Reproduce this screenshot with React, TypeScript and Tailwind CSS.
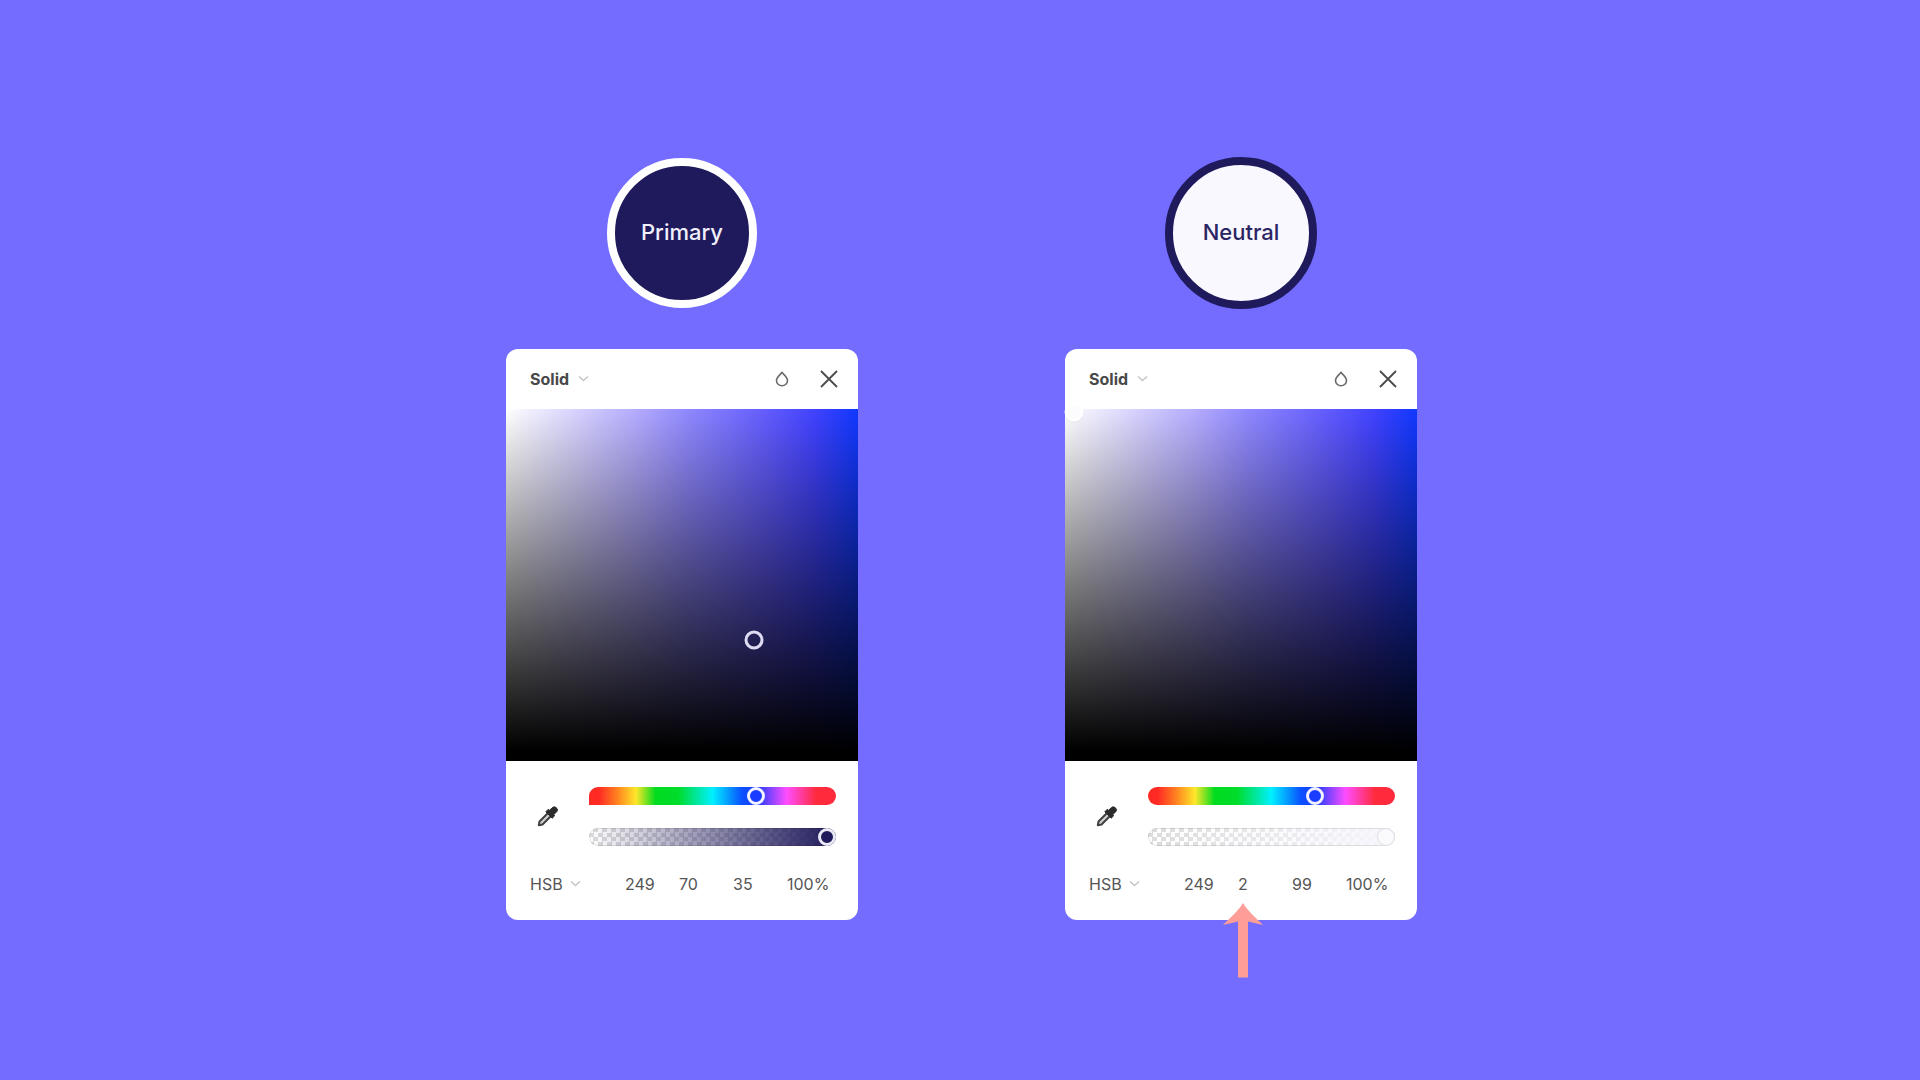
import React from 'react';
import clsx from 'clsx';

type Picker = {
  name: string;
  swatch: string;
  // handle position inside the saturation area
  x: number;
  y: number;
  handle: string;
  hueTrack: string;
  alphaTrack: string;
  alphaThumb: string;
  values: { label: string; value: string }[];
  pointer?: boolean;
};

const pickers: Picker[] = [
  {
    name: 'Primary',
    swatch: 'size-[150px] border-white bg-[#1f1a5b] text-[#f0effb]',
    x: 248,
    y: 231,
    handle: 'border-[#dddcf2]',
    hueTrack: 'rounded-full rounded-bl-none',
    alphaTrack: 'bg-linear-to-r from-[#1f1a5b]/0 to-[#1f1a5b]',
    alphaThumb:
      '[&::-webkit-slider-thumb]:border-3 [&::-webkit-slider-thumb]:border-[#e9e8f5] [&::-webkit-slider-thumb]:bg-[#1f1a5b]',
    values: [
      { label: 'Hue', value: '249' },
      { label: 'Saturation', value: '70' },
      { label: 'Brightness', value: '35' },
      { label: 'Opacity', value: '100%' },
    ],
  },
  {
    name: 'Neutral',
    swatch: 'size-[152px] border-[#1f1a5b] bg-[#f9f8fe] text-[#2b2563]',
    x: 9,
    y: 3,
    handle: 'border-white bg-[#fcfcfe] shadow-xs',
    hueTrack: 'rounded-full',
    alphaTrack: 'bg-linear-to-r from-[#f7f6fc]/0 to-[#f7f6fc]',
    alphaThumb:
      '[&::-webkit-slider-thumb]:border [&::-webkit-slider-thumb]:border-[#dedee4] [&::-webkit-slider-thumb]:bg-[#fbfbfd]',
    values: [
      { label: 'Hue', value: '249' },
      { label: 'Saturation', value: '2' },
      { label: 'Brightness', value: '99' },
      { label: 'Opacity', value: '100%' },
    ],
    pointer: true,
  },
];

function Chevron() {
  return (
    <svg className="pointer-events-none h-2 w-3" viewBox="0 0 12 8" fill="none" stroke="#c4c4c4" strokeWidth="1.4">
      <path d="M1 1.500 5.500 5.500 10 1.500" />
    </svg>
  );
}

function Eyedropper() {
  return (
    <svg className="size-[22px]" viewBox="0 0 22 22" fill="none">
      <path d="M11.500 7.500 2.500 16.500 1.800 20.200 5.500 19.500 14.500 10.500" fill="#cfcfcf" stroke="#3f3f3f" strokeWidth="2" strokeLinejoin="round" />
      <path
        d="M15 3a3 3 0 0 1 4.600 4l-2.900 2.500 1.100 1.100-2.600 2.600-6.400-6.400 2.600-2.600 1.100 1.100z"
        fill="#2b2b2b"
        stroke="#2b2b2b"
        strokeLinejoin="round"
      />
    </svg>
  );
}

function ColorPanel({ picker }: { picker: Picker }) {
  return (
    <div className="relative mt-10 w-[352px] rounded-xl bg-white text-[#555555]">
      {/* Header */}
      <div className="flex h-[60px] items-center pr-5 pl-6">
        <select
          aria-label={`${picker.name} fill type`}
          className="w-12 appearance-none bg-transparent text-base font-bold text-[#484848] outline-none"
        >
          <option>Solid</option>
        </select>
        <Chevron />
        <div className="ml-auto flex items-center gap-[26px]">
          <button aria-label="Blend mode" className="flex size-6 items-center justify-center">
            <svg className="size-4" viewBox="0 0 16 16" fill="none" stroke="#6b6b6b" strokeWidth="1.6">
              <path d="M8 1.3C6.500 3.600 2.500 6.200 2.500 9.500a5.500 5.300 0 0 0 11 0C13.500 6.200 9.500 3.600 8 1.300z" strokeLinejoin="round" />
            </svg>
          </button>
          <button aria-label="Close" className="flex size-[18px] items-center justify-center">
            <svg className="size-[18px]" viewBox="0 0 18 18" stroke="#4a4a4a" strokeWidth="1.8">
              <path d="M1 1 17 17M17 1 1 17" />
            </svg>
          </button>
        </div>
      </div>

      {/* Saturation / brightness */}
      <div className="relative h-[352px] bg-[linear-gradient(to_top,#000_3%,transparent),linear-gradient(to_right,#fff,#b6aeff_36%,#8f88ff_52%,#615aff_75%,#4042ff_88%,#1038ff)]">
        <div
          className={clsx('absolute size-[19px] -translate-1/2 rounded-full border-3', picker.handle)}
          style={{ left: picker.x, top: picker.y }}
        />
      </div>

      {/* Sliders */}
      <div className="flex items-center pt-[26px] pr-[22px] pl-[31px]">
        <button aria-label="Pick color" className="flex size-[22px]">
          <Eyedropper />
        </button>
        <div className="ml-auto flex w-[247px] flex-col gap-[23px]">
          <input
            type="range"
            aria-label={`${picker.name} hue`}
            min={0}
            max={360}
            defaultValue={249}
            className={clsx(
              'block h-[18px] w-full appearance-none bg-[linear-gradient(to_right,#ff2a24_4%,#ff8a20_12%,#ffe72a_19%,#00dc1e_27%,#00dc2a_36%,#00f0ff_50%,#0a50ff_62%,#1a3cff_68%,#ff4dff_80%,#ff2a3c_92%)] [&::-webkit-slider-thumb]:size-[18px] [&::-webkit-slider-thumb]:appearance-none [&::-webkit-slider-thumb]:rounded-full [&::-webkit-slider-thumb]:border-3 [&::-webkit-slider-thumb]:border-[#f1f1ff] [&::-webkit-slider-thumb]:bg-[#1a3cff]',
              picker.hueTrack
            )}
          />
          <div className="rounded-full bg-[repeating-conic-gradient(#dcdcdc_0_25%,#fff_0_50%)] bg-size-[9px_9px]">
            <input
              type="range"
              aria-label={`${picker.name} opacity`}
              defaultValue={100}
              className={clsx(
                'block h-[18px] w-full appearance-none rounded-full inset-ring inset-ring-black/10 [&::-webkit-slider-thumb]:size-[18px] [&::-webkit-slider-thumb]:appearance-none [&::-webkit-slider-thumb]:rounded-full',
                picker.alphaTrack,
                picker.alphaThumb
              )}
            />
          </div>
        </div>
      </div>

      {/* Values */}
      <div className="flex items-center pt-[26px] pb-6 pl-6">
        <select
          aria-label={`${picker.name} color model`}
          className="w-10 appearance-none bg-transparent text-base outline-none"
        >
          <option>HSB</option>
        </select>
        <Chevron />
        <div className="ml-[43px] flex">
          {picker.values.map((item) => (
            <input
              key={item.label}
              aria-label={`${picker.name} ${item.label}`}
              defaultValue={item.value}
              className="w-[54px] bg-transparent text-base outline-none last:w-12"
            />
          ))}
        </div>
      </div>

      {picker.pointer && (
        <svg className="absolute top-[554px] left-[158px] h-[75px] w-10" viewBox="0 0 40 75" fill="#ff9e98">
          <path d="M20 0C24 7 34 16 40 22L25 18.500V74.500H15V18.500L0 22C6 16 16 7 20 0z" />
        </svg>
      )}
    </div>
  );
}

export default function App() {
  return (
    <main className="flex min-h-screen items-center justify-center gap-[207px] bg-[#736cff] pb-1 pl-[3px] font-['Inter',sans-serif]">
      {pickers.map((picker) => (
        <section key={picker.name} className="flex flex-col items-center">
          <div className="flex h-[152px] items-center">
            <h2
              className={clsx(
                'flex items-center justify-center rounded-full border-8 text-[22px] font-medium',
                picker.swatch
              )}
            >
              {picker.name}
            </h2>
          </div>
          <ColorPanel picker={picker} />
        </section>
      ))}
    </main>
  );
}
